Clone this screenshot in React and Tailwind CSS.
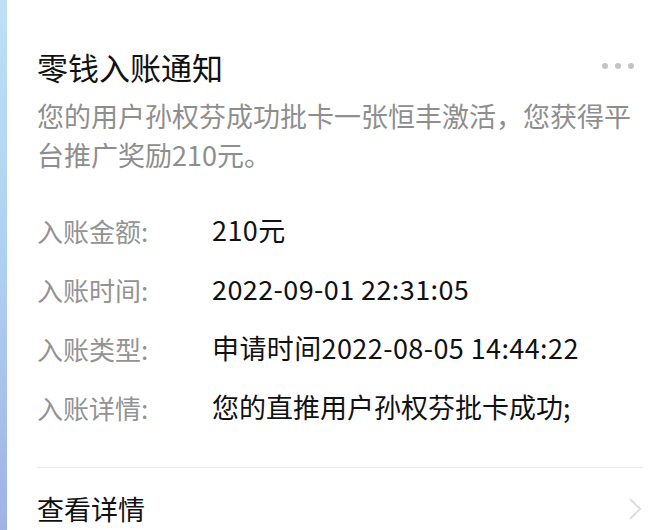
import React from "react";

const rows = [
  ["入账金额:", "210元", true],
  ["入账时间:", "2022-09-01 22:31:05", true],
  ["入账类型:", "申请时间2022-08-05 14:44:22", true],
  ["入账详情:", "您的直推用户孙权芬批卡成功;", false],
];

export default function App() {
  return (
    <div
      className="flex w-[667px] h-[530px] overflow-hidden bg-white"
      style={{ fontFamily: '"Noto Sans CJK SC", "Noto Sans", sans-serif' }}
    >
      <div className="w-[7px] shrink-0 bg-gradient-to-b from-[#bde0f7] via-[#aed0f0] to-[#9fb2e6]" />
      <div className="flex-1 flex flex-col pl-[30px] pr-[24px] pt-[48px]">
        <div className="flex items-center justify-between">
          <div className="text-[31px] leading-[37px] text-[#111111]">零钱入账通知</div>
          <div className="flex gap-[7px] pr-[9px] -mt-[2px]">
            <span className="w-[6px] h-[6px] rounded-full bg-[#c4c4c4]" />
            <span className="w-[6px] h-[6px] rounded-full bg-[#c4c4c4]" />
            <span className="w-[6px] h-[6px] rounded-full bg-[#c4c4c4]" />
          </div>
        </div>
        <div className="mt-[11px] text-[27px] leading-[39px] text-[#8e8e8e]">
          您的用户孙权芬成功批卡一张恒丰激活，您获得平台推广奖励210元。
        </div>
        <div className="mt-[27px] flex flex-col">
          {rows.map(([k, v, tracked]) => (
            <div key={k} className="flex h-[59px] items-center text-[26px]">
              <div className="w-[175px] shrink-0 text-[#939393]">{k}</div>
              <div
                className={
                  tracked
                    ? "text-[27px] tracking-[0.4px] text-[#111111] whitespace-nowrap"
                    : "text-[27px] text-[#111111] whitespace-nowrap"
                }
              >
                {v}
              </div>
            </div>
          ))}
        </div>
        <div className="mt-[30px] h-px bg-[#e8e8e8]" />
        <div className="flex items-center justify-between pt-[21px]">
          <div className="text-[27px] leading-[40px] text-[#111111]">查看详情</div>
          <svg width="14" height="24" viewBox="0 0 14 24" className="mr-[1px]">
            <path d="M2 2 L12 12 L2 22" fill="none" stroke="#dedede" strokeWidth="2" />
          </svg>
        </div>
      </div>
    </div>
  );
}
